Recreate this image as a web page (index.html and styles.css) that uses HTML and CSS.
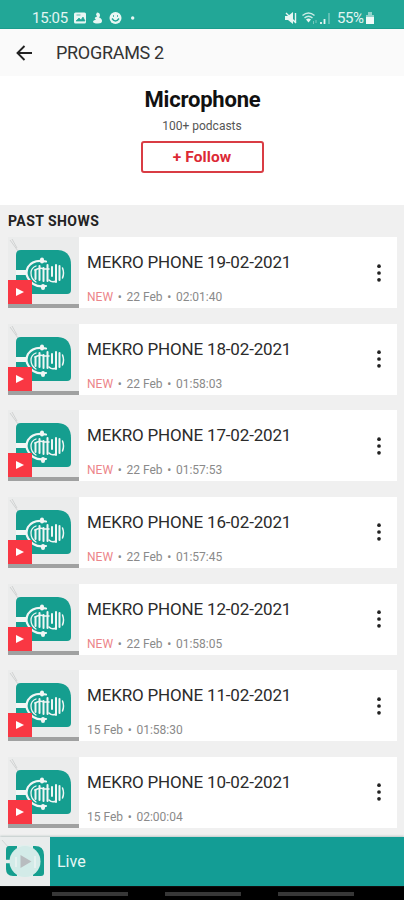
FILE: index.html
```
<!DOCTYPE html>
<html lang="en">
<head>
<meta charset="utf-8">
<title>Programs</title>
<link rel="stylesheet" href="styles.css">
</head>
<body>
<svg class="defs" aria-hidden="true">
  <symbol id="cover" viewBox="0 0 71 71">
    <rect width="71" height="71" fill="#ebecec"/>
    <path d="M2 3l8 11M4 2l5 9" stroke="#c9cbcb" stroke-width=".8" fill="none"/>
    <path d="M13 13H50Q63 14 63 28V53Q63 57 59 57H18Q8 57 8 47V18Q8 13 13 13Z" fill="#159e8f"/>
    <g fill="none" stroke="#f2f6f5" stroke-linecap="round">
      <path d="M8 35.500h10" stroke-width="5" stroke-linecap="butt"/>
      <path d="M38 24.500Q25 22 20 30Q17 36 20 41Q25 51 38 49" stroke-width="2.200"/>
      <path d="M34 22.500v2M35 49v2" stroke-width="4"/>
      <path d="M28 29Q23 31 23 36Q23 42 28 45" stroke-width="1.300"/>
      <path d="M27.500 33v9M31.500 29v14M35.500 31v13M39.500 28v16" stroke-width="2"/>
      <path d="M44 30v9M48 28v17M51.500 29v14" stroke-width="2"/>
      <path d="M54.500 31q2 5 0 10" stroke-width="1.500"/>
      <path d="M27 33q5-3 9-1h5M41 43q3 3 7 1" stroke-width="1.600"/>
    </g>
  </symbol>
  <symbol id="more" viewBox="0 0 6 20">
    <g fill="#222"><circle cx="3" cy="3.200" r="1.850"/><circle cx="3" cy="10" r="1.850"/><circle cx="3" cy="16.800" r="1.850"/></g>
  </symbol>
</svg>
<div class="screen">
  <div class="status">
    <span class="clock">15:05</span>
    <svg class="notices" width="64" height="14" viewBox="0 0 64 14">
      <rect x="0" y="1.500" width="12" height="11" rx="1.500" fill="#e8f6f3"/>
      <path d="M2 10l3-3 2 2 2-3 2 4zM2.500 4h4" fill="#22a797" stroke="#22a797" stroke-width=".7"/>
      <path d="M23 1.500q3 0 3 3 0 1-1 2 3 1 3 3.500 0 2.500-4 2.500-5 0-5-2 0-1 3-2-2-1-1-2l2-1-1-2z" fill="#e8f6f3"/>
      <circle cx="41.500" cy="7" r="6" fill="#e8f6f3"/>
      <path d="M38 7.500q3.500 5 7 0M39 5h1M43 5h1" stroke="#22a797" stroke-width="1.500" fill="none"/>
      <circle cx="58.700" cy="7" r="1.700" fill="#e8f6f3"/>
    </svg>
    <svg class="signals" width="46" height="14" viewBox="0 0 46 14">
      <path d="M0 5h3l5-4v12l-5-4h-3z" fill="#e8f6f3"/>
      <path d="M1 2l10 10M10.500 2v10" stroke="#e8f6f3" stroke-width="1.400"/>
      <path d="M17.500 4.500q6-5 12 0M19.500 7q4-3.500 8 0" stroke="#c9ebe5" stroke-width="1.500" fill="none"/>
      <path d="M21 8.500q2.500-2 5 0l-2.500 3z" fill="#e8f6f3"/>
      <path d="M28.500 10v3M31 9v3" stroke="#75c9be"/>
      <path d="M36 11v2M39.500 8v5" stroke="#e8f6f3" stroke-width="1.800"/>
      <path d="M44 2v11" stroke="#75c9be" stroke-width="1.500"/>
    </svg>
    <span class="percent">55%</span>
    <svg class="battery" width="8" height="12" viewBox="0 0 8 12"><path d="M2 0h4v3h2v9H0V3h2z" fill="#8fd3ca"/><path d="M0 5h8v7H0z" fill="#f0faf8"/></svg>
  </div>
  <header class="appbar">
    <svg width="17" height="16" viewBox="0 0 17 16"><path d="M16 8H2M8.500 1L1.500 8l7 7" fill="none" stroke="#222" stroke-width="1.900"/></svg>
    <span class="appbar-title">PROGRAMS 2</span>
  </header>
  <section class="intro">
    <h1>Microphone</h1>
    <p>100+ podcasts</p>
    <button class="follow">+ Follow</button>
  </section>
  <main class="shows">
    <h2>PAST SHOWS</h2>
    <div class="list">
      <article class="show"><div class="art"><svg><use href="#cover"/></svg><span class="play"><svg viewBox="0 0 8 8"><path d="M0 0l8 4-8 4z"/></svg></span></div><div class="info"><h3>MEKRO PHONE 19-02-2021</h3><p><b>NEW</b> <i>•</i> 22 Feb <i>•</i> 02:01:40</p></div><svg class="more"><use href="#more"/></svg></article>
      <article class="show"><div class="art"><svg><use href="#cover"/></svg><span class="play"><svg viewBox="0 0 8 8"><path d="M0 0l8 4-8 4z"/></svg></span></div><div class="info"><h3>MEKRO PHONE 18-02-2021</h3><p><b>NEW</b> <i>•</i> 22 Feb <i>•</i> 01:58:03</p></div><svg class="more"><use href="#more"/></svg></article>
      <article class="show"><div class="art"><svg><use href="#cover"/></svg><span class="play"><svg viewBox="0 0 8 8"><path d="M0 0l8 4-8 4z"/></svg></span></div><div class="info"><h3>MEKRO PHONE 17-02-2021</h3><p><b>NEW</b> <i>•</i> 22 Feb <i>•</i> 01:57:53</p></div><svg class="more"><use href="#more"/></svg></article>
      <article class="show"><div class="art"><svg><use href="#cover"/></svg><span class="play"><svg viewBox="0 0 8 8"><path d="M0 0l8 4-8 4z"/></svg></span></div><div class="info"><h3>MEKRO PHONE 16-02-2021</h3><p><b>NEW</b> <i>•</i> 22 Feb <i>•</i> 01:57:45</p></div><svg class="more"><use href="#more"/></svg></article>
      <article class="show"><div class="art"><svg><use href="#cover"/></svg><span class="play"><svg viewBox="0 0 8 8"><path d="M0 0l8 4-8 4z"/></svg></span></div><div class="info"><h3>MEKRO PHONE 12-02-2021</h3><p><b>NEW</b> <i>•</i> 22 Feb <i>•</i> 01:58:05</p></div><svg class="more"><use href="#more"/></svg></article>
      <article class="show"><div class="art"><svg><use href="#cover"/></svg><span class="play"><svg viewBox="0 0 8 8"><path d="M0 0l8 4-8 4z"/></svg></span></div><div class="info"><h3>MEKRO PHONE 11-02-2021</h3><p>15 Feb <i>•</i> 01:58:30</p></div><svg class="more"><use href="#more"/></svg></article>
      <article class="show"><div class="art"><svg><use href="#cover"/></svg><span class="play"><svg viewBox="0 0 8 8"><path d="M0 0l8 4-8 4z"/></svg></span></div><div class="info"><h3>MEKRO PHONE 10-02-2021</h3><p>15 Feb <i>•</i> 02:00:04</p></div><svg class="more"><use href="#more"/></svg></article>
    </div>
  </main>
  <footer class="player">
    <svg class="live-art" width="50" height="49" viewBox="0 0 50 49">
      <rect width="50" height="49" fill="#e9ecec"/>
      <path d="M2 3l7 8" stroke="#d3d6d6"/>
      <path d="M9 9H35Q44 9 44 18V36Q44 39 41 39H13Q6 39 6 32V13Q6 9 9 9Z" fill="#159e8f"/>
      <path d="M5 24.500h8" stroke="#e9ecec" stroke-width="3.500"/>
      <path d="M17 8h16v32H17z" fill="#e3efed"/>
      <circle cx="25" cy="24.500" r="15.500" fill="#d3ebe8"/>
      <path d="M16 20v10M35 19v12" stroke="#e6f1f0" stroke-width="2"/>
      <path d="M20.500 18l11 6.500-11 6.500z" fill="#b8bcbf"/>
    </svg>
    <span>Live</span>
  </footer>
  <nav class="navbar"><i></i><i></i><i></i></nav>
</div>
</body>
</html>
```
FILE: styles.css
```
* { box-sizing: border-box; margin: 0; padding: 0; }
body { font-family: Roboto, "Liberation Sans", sans-serif; background: #fff; overflow: hidden; }
.defs { position: absolute; width: 0; height: 0; }
svg { display: block; flex: none; }
.screen { width: 404px; height: 900px; display: flex; flex-direction: column; overflow: hidden; }
.status { flex: none; height: 29px; padding: 8px 30px 0 32px; display: flex; align-items: center; background: #22a797; border-bottom: 1px solid #1b9c8c; color: #e3f5f2; font-size: 15px; line-height: 20px; }
.clock { width: 42px; letter-spacing: -.3px; }
.signals { margin-left: auto; }
.percent { width: 28px; margin-left: 6px; letter-spacing: -.4px; }
.battery { margin-left: 1px; }
.appbar { flex: none; height: 47px; padding: 0 16px; display: flex; align-items: center; gap: 23px; background: #fafafa; color: #333; }
.appbar-title { font-size: 18px; letter-spacing: -.3px; }
.intro { flex: none; height: 129px; display: flex; flex-direction: column; align-items: center; padding-top: 11px; }
.intro h1 { font-size: 22px; line-height: 26px; font-weight: 700; letter-spacing: -.2px; text-indent: 1px; color: #111; }
.intro p { margin-top: 6px; font-size: 12px; line-height: 14px; color: #555; }
.follow { margin-top: 8px; width: 123px; height: 32px; border: 2px solid #d93c44; border-radius: 3px; background: #fff; color: #dc2935; font: 700 15.500px Roboto, sans-serif; letter-spacing: .1px; }
.shows { flex: 1; min-height: 0; overflow: hidden; padding: 0 7px 0 8px; background: #f0f0f0; }
.shows h2 { height: 32px; padding-top: 7px; font-size: 14px; line-height: 18px; font-weight: 700; letter-spacing: .45px; color: #222; }
.list { display: flex; flex-direction: column; gap: 15.670px; }
.show { height: 71px; display: flex; background: #fff; padding-right: 15px; }
.art { position: relative; flex: none; width: 71px; height: 71px; border-bottom: 4px solid #a0a1a1; overflow: hidden; }
.art > svg { width: 71px; height: 71px; }
.play { position: absolute; left: 0; bottom: 0; width: 24px; height: 24px; background: #f93743; display: grid; place-items: center; }
.play svg { width: 8px; height: 8px; fill: #fff; }
.info { flex: 1; padding: 15px 0 0 8px; }
.info h3 { font-size: 17px; line-height: 21px; font-weight: 400; letter-spacing: -.17px; color: #2b2b2b; white-space: nowrap; }
.info p { margin-top: 17px; font-size: 12px; line-height: 15px; color: #8a8a8a; white-space: nowrap; }
.info b { font-weight: 400; color: #ec858a; }
.info i { font-style: normal; margin: 0 1.700px; }
.more { width: 6px; height: 20px; align-self: center; }
.player { flex: none; height: 49px; display: flex; align-items: center; gap: 7px; background: #139d95; color: #e8f7f5; font-size: 16px; box-shadow: 0 -1px 2px #bdc9c8; position: relative; }
.navbar { flex: none; height: 14px; padding: 6px 0 0 52px; display: flex; gap: 37px; background: #000; }
.navbar i { width: 76px; height: 4px; background: #373737; }
```
